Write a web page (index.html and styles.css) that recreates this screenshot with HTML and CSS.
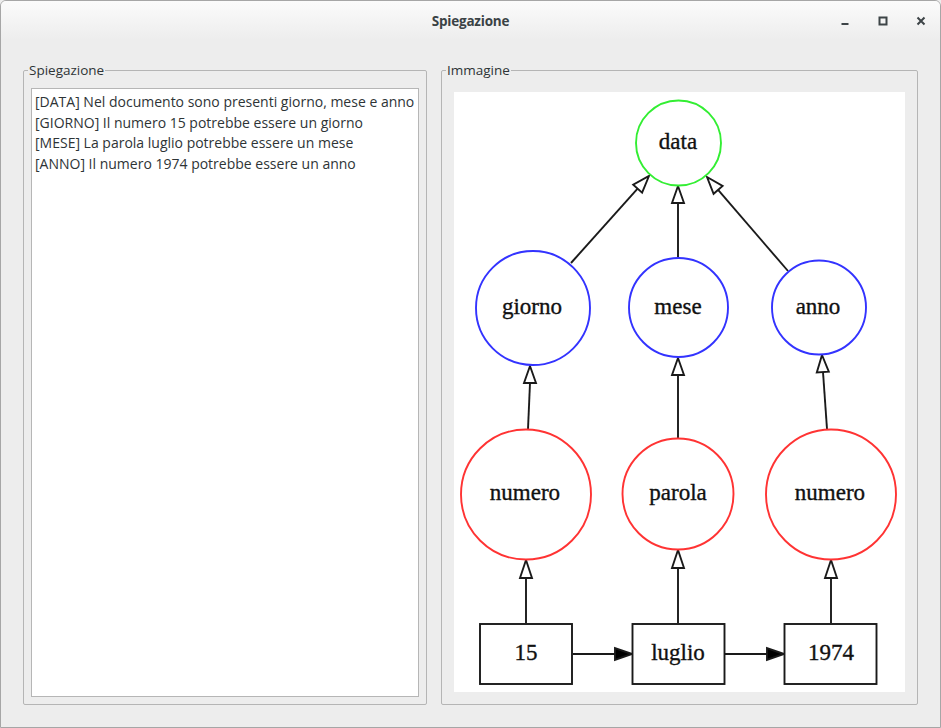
FILE: index.html
```html
<!DOCTYPE html>
<html lang="it">
<head>
<meta charset="utf-8">
<title>Spiegazione</title>
<link rel="stylesheet" href="styles.css">
</head>
<body>
<div class="window">
  <header class="titlebar">
    <div class="tb-spacer"></div>
    <div class="tb-title">Spiegazione</div>
    <div class="tb-buttons">
      <span class="tb-btn"><svg width="16" height="16" viewBox="0 0 16 16"><rect x="4.5" y="10" width="7" height="2" fill="#3d4447"/></svg></span>
      <span class="tb-btn"><svg width="16" height="16" viewBox="0 0 16 16"><rect x="4.5" y="4.5" width="7" height="7" fill="none" stroke="#3d4447" stroke-width="2"/></svg></span>
      <span class="tb-btn"><svg width="16" height="16" viewBox="0 0 16 16"><path d="M4.5 4.5 L11.5 11.5 M11.5 4.5 L4.5 11.5" stroke="#3d4447" stroke-width="2" fill="none"/></svg></span>
    </div>
  </header>
  <main class="content">
    <fieldset class="group group-left">
      <legend>Spiegazione</legend>
      <div class="textbox">
        <div class="line">[DATA] Nel documento sono presenti giorno, mese e anno</div>
        <div class="line">[GIORNO] Il numero 15 potrebbe essere un giorno</div>
        <div class="line">[MESE] La parola luglio potrebbe essere un mese</div>
        <div class="line">[ANNO] Il numero 1974 potrebbe essere un anno</div>
      </div>
    </fieldset>
    <fieldset class="group group-right">
      <legend>Immagine</legend>
      <div class="image">
        <svg class="graph" width="451" height="600" viewBox="454 92 451 600">
          <rect x="454" y="92" width="451" height="600" fill="#fff"/>
          <g class="edges" stroke="#1a1a1a" stroke-width="1.9" fill="none">
            <line x1="571" y1="263" x2="637.6" y2="188.7"/>
            <line x1="678" y1="257" x2="678" y2="203"/>
            <line x1="788" y1="271" x2="718.1" y2="189.9"/>
            <line x1="528" y1="429" x2="530" y2="383"/>
            <line x1="678" y1="438" x2="678" y2="375"/>
            <line x1="827" y1="429" x2="823" y2="372"/>
            <line x1="526" y1="623" x2="526" y2="578"/>
            <line x1="678" y1="623" x2="678" y2="568"/>
            <line x1="831" y1="623" x2="831" y2="578"/>
            <line x1="573" y1="654" x2="615" y2="654"/>
            <line x1="725" y1="654" x2="767" y2="654"/>
          </g>
          <g class="heads-open" stroke="#1a1a1a" stroke-width="1.9" fill="#fff" stroke-linejoin="miter">
            <polygon points="649,176 642.1,192.7 633.2,184.7"/>
            <polygon points="678,186 672,203 684,203"/>
            <polygon points="707,177 722.6,186 713.6,193.8"/>
            <polygon points="530,366 524,383 536,383"/>
            <polygon points="678,358 672,375 684,375"/>
            <polygon points="822,355 816.8,372.4 828.8,371.6"/>
            <polygon points="526,560 520,578 532,578"/>
            <polygon points="678,550 672,568 684,568"/>
            <polygon points="831,560 825,578 837,578"/>
          </g>
          <g class="heads-filled" stroke="#1a1a1a" stroke-width="1.9" fill="#000">
            <polygon points="632,654 615,648 615,660"/>
            <polygon points="784,654 767,648 767,660"/>
          </g>
          <g class="nodes" fill="#fff" stroke-width="1.9">
            <circle cx="678.5" cy="143" r="42.5" stroke="#33ee33"/>
            <circle cx="533" cy="308" r="57" stroke="#3333ff"/>
            <circle cx="678.5" cy="307.5" r="49.5" stroke="#3333ff"/>
            <circle cx="819" cy="307.5" r="47" stroke="#3333ff"/>
            <circle cx="526" cy="494.5" r="65" stroke="#ff3333"/>
            <circle cx="678" cy="494" r="55.5" stroke="#ff3333"/>
            <circle cx="831" cy="494.5" r="65" stroke="#ff3333"/>
            <rect x="480" y="624" width="92" height="60" stroke="#1a1a1a"/>
            <rect x="632.5" y="624" width="92" height="60" stroke="#1a1a1a"/>
            <rect x="784.5" y="624" width="92" height="60" stroke="#1a1a1a"/>
          </g>
          <g class="labels" font-family="'Liberation Serif', 'Times New Roman', serif" font-size="23" fill="#111" stroke="#111" stroke-width="0.35" text-anchor="middle">
            <text x="678" y="149">data</text>
            <text x="532" y="314">giorno</text>
            <text x="678" y="314">mese</text>
            <text x="818" y="314">anno</text>
            <text x="525" y="500">numero</text>
            <text x="678" y="500">parola</text>
            <text x="830" y="500">numero</text>
            <text x="526" y="660">15</text>
            <text x="678" y="660">luglio</text>
            <text x="831" y="660">1974</text>
          </g>
        </svg>
      </div>
    </fieldset>
  </main>
</div>
</body>
</html>
```

FILE: styles.css
```css
* {
  box-sizing: border-box;
}

html, body {
  margin: 0;
  padding: 0;
  background: #ededed;
}

body {
  font-family: "Open Sans", "Noto Sans", "DejaVu Sans", sans-serif;
  font-size: 14px;
  color: #2e3436;
}

.window {
  width: 941px;
  height: 728px;
  border: 1px solid #a6a6a6;
  border-radius: 6px 6px 0 0;
  background: #ededed;
  display: flex;
  flex-direction: column;
  overflow: hidden;
}

.titlebar {
  height: 39px;
  flex: none;
  display: grid;
  grid-template-columns: 1fr auto 1fr;
  align-items: center;
  background: linear-gradient(#fbfbfb, #ededed);
}

.tb-title {
  font-weight: 700;
  font-size: 13.5px;
  color: #3a4245;
  letter-spacing: -0.2px;
  padding-top: 1px;
}

.tb-buttons {
  justify-self: end;
  display: flex;
}

.tb-btn {
  width: 38px;
  height: 39px;
  display: flex;
  align-items: center;
  justify-content: center;
}

.tb-btn svg {
  display: block;
  margin-top: 1px;
}

.content {
  flex: 1;
  display: flex;
  gap: 14px;
  padding: 22px;
  min-height: 0;
}

.group {
  margin: 0;
  border: 1px solid #b5b5b5;
  border-radius: 2px;
  display: flex;
  flex-direction: column;
  min-width: 0;
}

.group legend {
  padding: 0 1px;
  font-size: 13.5px;
  line-height: 16px;
  color: #2e3436;
}

.group-left {
  width: 404px;
  padding: 10px 7px 7px 7px;
}

.group-left legend {
  margin-left: -3px;
}

.group-right {
  width: 477px;
  padding: 14px 11px 11px 12px;
}

.group-right legend {
  margin-left: -8px;
}

.textbox {
  flex: 1;
  background: #fff;
  border: 1px solid #b6b6b6;
  padding: 3px 3px;
}

.line {
  line-height: 20.6px;
  white-space: nowrap;
  color: #2e3436;
}

.image {
  width: 451px;
  height: 600px;
  background: #fff;
}

.graph {
  display: block;
}
```
